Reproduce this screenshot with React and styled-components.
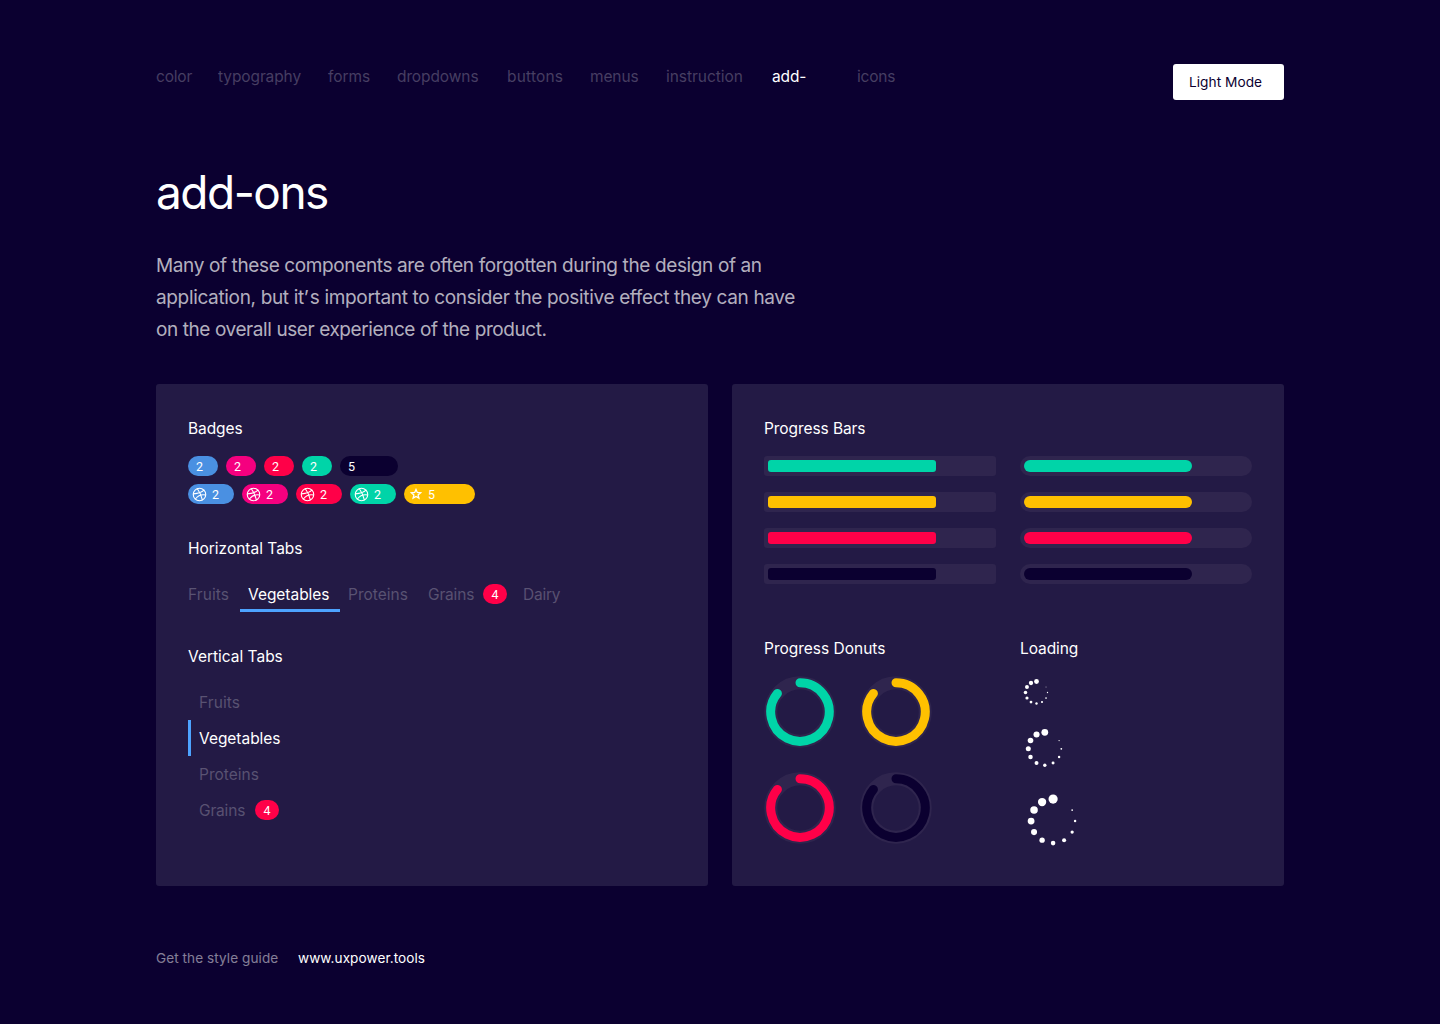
import React from "react";
import styled, { createGlobalStyle } from "styled-components";
import { Dribbble } from "lucide-react";

const color = {
  page: "#0b0030",
  panel: "#231a45",
  track: "#2f254e",
  blue: "#4a90e2",
  pink: "#f5007f",
  red: "#ff0048",
  green: "#00d4a8",
  yellow: "#ffc000",
  accent: "#4da3ff",
};

const GlobalStyle = createGlobalStyle`
  *, *::before, *::after { box-sizing: border-box; }
  body {
    margin: 0;
    background: ${color.page};
    color: #fff;
    font-family: Inter, "Liberation Sans", sans-serif;
    font-size: 15.5px;
    line-height: 24px;
    letter-spacing: -0.05px;
  }
`;

const Page = styled.div`
  width: 1440px;
  height: 1024px;
  padding: 64px 156px 0;
  overflow: hidden;
  background: ${color.page};
`;

const Header = styled.header`
  display: flex;
  justify-content: space-between;
  align-items: flex-start;
`;

const Nav = styled.nav`
  display: flex;
  padding-top: 1px;
`;

const NavLink = styled.a`
  width: ${(p) => p.$width}px;
  letter-spacing: ${(p) => p.$tracking}px;
  color: ${(p) => (p.$active ? "#fff" : "rgba(255, 255, 255, 0.25)")};
`;

const ModeButton = styled.button`
  width: 111px;
  height: 36px;
  padding: 0 16px;
  border: 0;
  border-radius: 3px;
  background: #fff;
  color: ${color.page};
  font: inherit;
  font-size: 13.7px;
  letter-spacing: 0.03px;
  text-align: left;
`;

const Title = styled.h1`
  margin: 64px 0 29px;
  font-size: 46px;
  font-weight: 400;
  line-height: 57px;
  letter-spacing: -1.5px;
`;

const Intro = styled.p`
  margin: 0 0 38px;
  font-size: 19px;
  line-height: 32px;
  color: rgba(255, 255, 255, 0.7);
`;

const IntroLine = styled.span`
  display: block;
  white-space: nowrap;
  letter-spacing: ${(p) => p.$tracking}px;
`;

const Apostrophe = styled.span`
  letter-spacing: 1px;
`;

const Panels = styled.main`
  display: grid;
  grid-template-columns: 1fr 1fr;
  gap: 24px;
`;

const Panel = styled.section`
  height: 502px;
  padding: 32px;
  border-radius: 3px;
  background: ${color.panel};
`;

const Heading = styled.h2`
  margin: 0 0 15px;
  padding-top: 1px;
  font-size: inherit;
  font-weight: 400;
  line-height: 24px;
  letter-spacing: ${(p) => (p.$tight ? -0.08 : -0.01)}px;
`;

const Group = styled.div`
  margin-bottom: ${(p) => p.$space || 32}px;
`;

const BadgeRow = styled.div`
  display: flex;
  gap: 8px;
  & + & { margin-top: 8px; }
`;

const Badge = styled.span`
  display: flex;
  align-items: center;
  width: ${(p) => p.$width}px;
  height: 20px;
  padding-left: ${(p) => p.$inset || 8}px;
  border-radius: 10px;
  background: ${(p) => p.$color};
`;

const BadgeCount = styled.span`
  margin-left: ${(p) => p.$gap || 0}px;
  padding-top: 1px;
  font-family: Roboto, Inter, sans-serif;
  font-size: 12.5px;
  line-height: 19px;
`;

const CountPill = styled.span`
  width: 24px;
  height: 20px;
  margin-left: ${(p) => p.$gap}px;
  padding-top: 1px;
  border-radius: 10px;
  background: ${color.red};
  color: #fff;
  font-family: Roboto, Inter, sans-serif;
  font-size: 12.5px;
  line-height: 20px;
  letter-spacing: 0;
  text-align: center;
`;

const HorizontalTabs = styled.div`
  display: flex;
`;

const HorizontalTab = styled.div`
  display: flex;
  align-items: center;
  width: ${(p) => p.$width}px;
  height: 36px;
  padding-left: ${(p) => (p.$first ? 0 : 8)}px;
  color: ${(p) => (p.$active ? "#fff" : "rgba(255, 255, 255, 0.25)")};
  box-shadow: ${(p) => (p.$active ? `inset 0 -3px ${color.accent}` : "none")};
`;

const TabLabel = styled.span`
  width: ${(p) => (p.$width ? `${p.$width}px` : "auto")};
  padding-top: 2px;
  letter-spacing: ${(p) => p.$tracking || 0}px;
`;

const VerticalTab = styled.div`
  display: flex;
  align-items: center;
  height: 36px;
  padding-left: 8px;
  border-left: 3px solid ${(p) => (p.$active ? color.accent : "transparent")};
  color: ${(p) => (p.$active ? "#fff" : "rgba(255, 255, 255, 0.25)")};
`;

const BarGrid = styled.div`
  display: grid;
  grid-template-columns: 1fr 1fr;
  gap: 16px 24px;
`;

const Track = styled.div`
  height: 20px;
  padding: 4px;
  border-radius: ${(p) => (p.$round ? 10 : 3)}px;
  background: ${color.track};
`;

const Fill = styled.div`
  width: 75%;
  height: 12px;
  border-radius: ${(p) => (p.$round ? 6 : 3)}px;
  background: ${(p) => p.$color};
`;

const Split = styled.div`
  display: grid;
  grid-template-columns: 1fr 1fr;
  column-gap: 24px;
`;

const DonutGrid = styled.div`
  display: grid;
  grid-template-columns: 72px 72px;
  gap: 24px;
  svg { display: block; }
`;

const Loaders = styled.div`
  display: flex;
  flex-direction: column;
  gap: 16px;
  svg { display: block; }
`;

const Footer = styled.footer`
  display: flex;
  gap: 20px;
  margin-top: 62px;
  font-size: 13.6px;
  line-height: 20px;
  letter-spacing: 0.06px;
`;

const FooterNote = styled.span`
  width: 122px;
  white-space: nowrap;
  color: rgba(255, 255, 255, 0.5);
`;

const links = [
  ["color", 62, -0.2],
  ["typography", 110, -0.1],
  ["forms", 69, -0.08],
  ["dropdowns", 110, -0.1],
  ["buttons", 83, 0.18],
  ["menus", 76, -0.12],
  ["instruction", 106, -0.03],
  ["add-", 85, -0.15],
  ["icons", 60, -0.18],
];

const solids = [color.blue, color.pink, color.red, color.green];
const levels = [color.green, color.yellow, color.red, color.page];

function StarIcon() {
  return (
    <svg width="12" height="12" viewBox="0 0 12 12" fill="none" stroke="#fff" strokeWidth="1.3">
      <path d="M6 1.5 7.3 4.5 10.6 4.75 8.1 6.9 8.9 10.1 6 8.4 3.1 10.1 3.9 6.9 1.4 4.75 4.7 4.5Z" />
    </svg>
  );
}

function Donut({ stroke }) {
  return (
    <svg width="72" height="72" viewBox="0 0 72 72" fill="none">
      <circle cx="36" cy="36" r="29.25" stroke={color.track} strokeWidth="13" />
      <path
        d="M36 6.75A29.25 29.25 0 1 1 13.4 17.4"
        stroke={stroke}
        strokeWidth="9"
        strokeLinecap="round"
      />
    </svg>
  );
}

const dotSizes = [1, 0.9, 0.82, 0.74, 0.66, 0.58, 0.5, 0.44, 0.36, 0.27, 0.19];

function Loader({ size, radius, dot, offset }) {
  const center = size / 2 + offset;
  return (
    <svg width={size} height={size} fill="#fff">
      {dotSizes.map((scale, i) => {
        const angle = (-90 - i * 30) * (Math.PI / 180);
        return (
          <circle
            key={i}
            cx={center + radius * Math.cos(angle)}
            cy={center + radius * Math.sin(angle)}
            r={(dot * scale) / 2}
          />
        );
      })}
    </svg>
  );
}

export default function App() {
  return (
    <Page>
      <GlobalStyle />
      <Header>
        <Nav>
          {links.map(([label, width, tracking]) => (
            <NavLink key={label} $width={width} $tracking={tracking} $active={label === "add-"}>
              {label}
            </NavLink>
          ))}
        </Nav>
        <ModeButton>Light Mode</ModeButton>
      </Header>

      <Title>add-ons</Title>
      <Intro>
        <IntroLine $tracking={-0.375}>
          Many of these components are often forgotten during the design of an
        </IntroLine>
        <IntroLine $tracking={-0.343}>
          application, but it<Apostrophe>’</Apostrophe>s important to consider the positive effect they can have
        </IntroLine>
        <IntroLine $tracking={-0.415}>on the overall user experience of the product.</IntroLine>
      </Intro>

      <Panels>
        <Panel>
          <Group>
            <Heading $tight>Badges</Heading>
            <BadgeRow>
              {solids.map((c) => (
                <Badge key={c} $color={c} $width={30}>
                  <BadgeCount>2</BadgeCount>
                </Badge>
              ))}
              <Badge $color={color.page} $width={58}>
                <BadgeCount>5</BadgeCount>
              </Badge>
            </BadgeRow>
            <BadgeRow>
              {solids.map((c) => (
                <Badge key={c} $color={c} $width={46} $inset={4}>
                  <Dribbble size={15} strokeWidth={1.75} />
                  <BadgeCount $gap={5}>2</BadgeCount>
                </Badge>
              ))}
              <Badge $color={color.yellow} $width={71} $inset={6}>
                <StarIcon />
                <BadgeCount $gap={6}>5</BadgeCount>
              </Badge>
            </BadgeRow>
          </Group>

          <Group>
            <Heading>Horizontal Tabs</Heading>
            <HorizontalTabs>
              <HorizontalTab $width={52} $first>
                <TabLabel $tracking={0.08}>Fruits</TabLabel>
              </HorizontalTab>
              <HorizontalTab $width={100} $active>
                <TabLabel $tracking={-0.03}>Vegetables</TabLabel>
              </HorizontalTab>
              <HorizontalTab $width={80}>
                <TabLabel>Proteins</TabLabel>
              </HorizontalTab>
              <HorizontalTab $width={95}>
                <TabLabel $width={47} $tracking={-0.16}>Grains</TabLabel>
                <CountPill $gap={8}>4</CountPill>
              </HorizontalTab>
              <HorizontalTab $width={60}>
                <TabLabel $tracking={-0.25}>Dairy</TabLabel>
              </HorizontalTab>
            </HorizontalTabs>
          </Group>

          <Heading>Vertical Tabs</Heading>
          <VerticalTab>
            <TabLabel $tracking={0.08}>Fruits</TabLabel>
          </VerticalTab>
          <VerticalTab $active>
            <TabLabel $tracking={-0.03}>Vegetables</TabLabel>
          </VerticalTab>
          <VerticalTab>
            <TabLabel>Proteins</TabLabel>
          </VerticalTab>
          <VerticalTab>
            <TabLabel $width={47} $tracking={-0.16}>Grains</TabLabel>
            <CountPill $gap={9}>4</CountPill>
          </VerticalTab>
        </Panel>

        <Panel>
          <Group $space={52}>
            <Heading $tight>Progress Bars</Heading>
            <BarGrid>
              {levels.map((c) => (
                <React.Fragment key={c}>
                  <Track>
                    <Fill $color={c} />
                  </Track>
                  <Track $round>
                    <Fill $color={c} $round />
                  </Track>
                </React.Fragment>
              ))}
            </BarGrid>
          </Group>

          <Split>
            <div>
              <Heading>Progress Donuts</Heading>
              <DonutGrid>
                {levels.map((c) => (
                  <Donut key={c} stroke={c} />
                ))}
              </DonutGrid>
            </div>
            <div>
              <Heading $tight>Loading</Heading>
              <Loaders>
                <Loader size={32} radius={11} dot={4.8} offset={0.5} />
                <Loader size={48} radius={16.5} dot={6.8} offset={0.8} />
                <Loader size={64} radius={22} dot={9.2} offset={1.1} />
              </Loaders>
            </div>
          </Split>
        </Panel>
      </Panels>

      <Footer>
        <FooterNote>Get the style guide</FooterNote>
        <span>www.uxpower.tools</span>
      </Footer>
    </Page>
  );
}
